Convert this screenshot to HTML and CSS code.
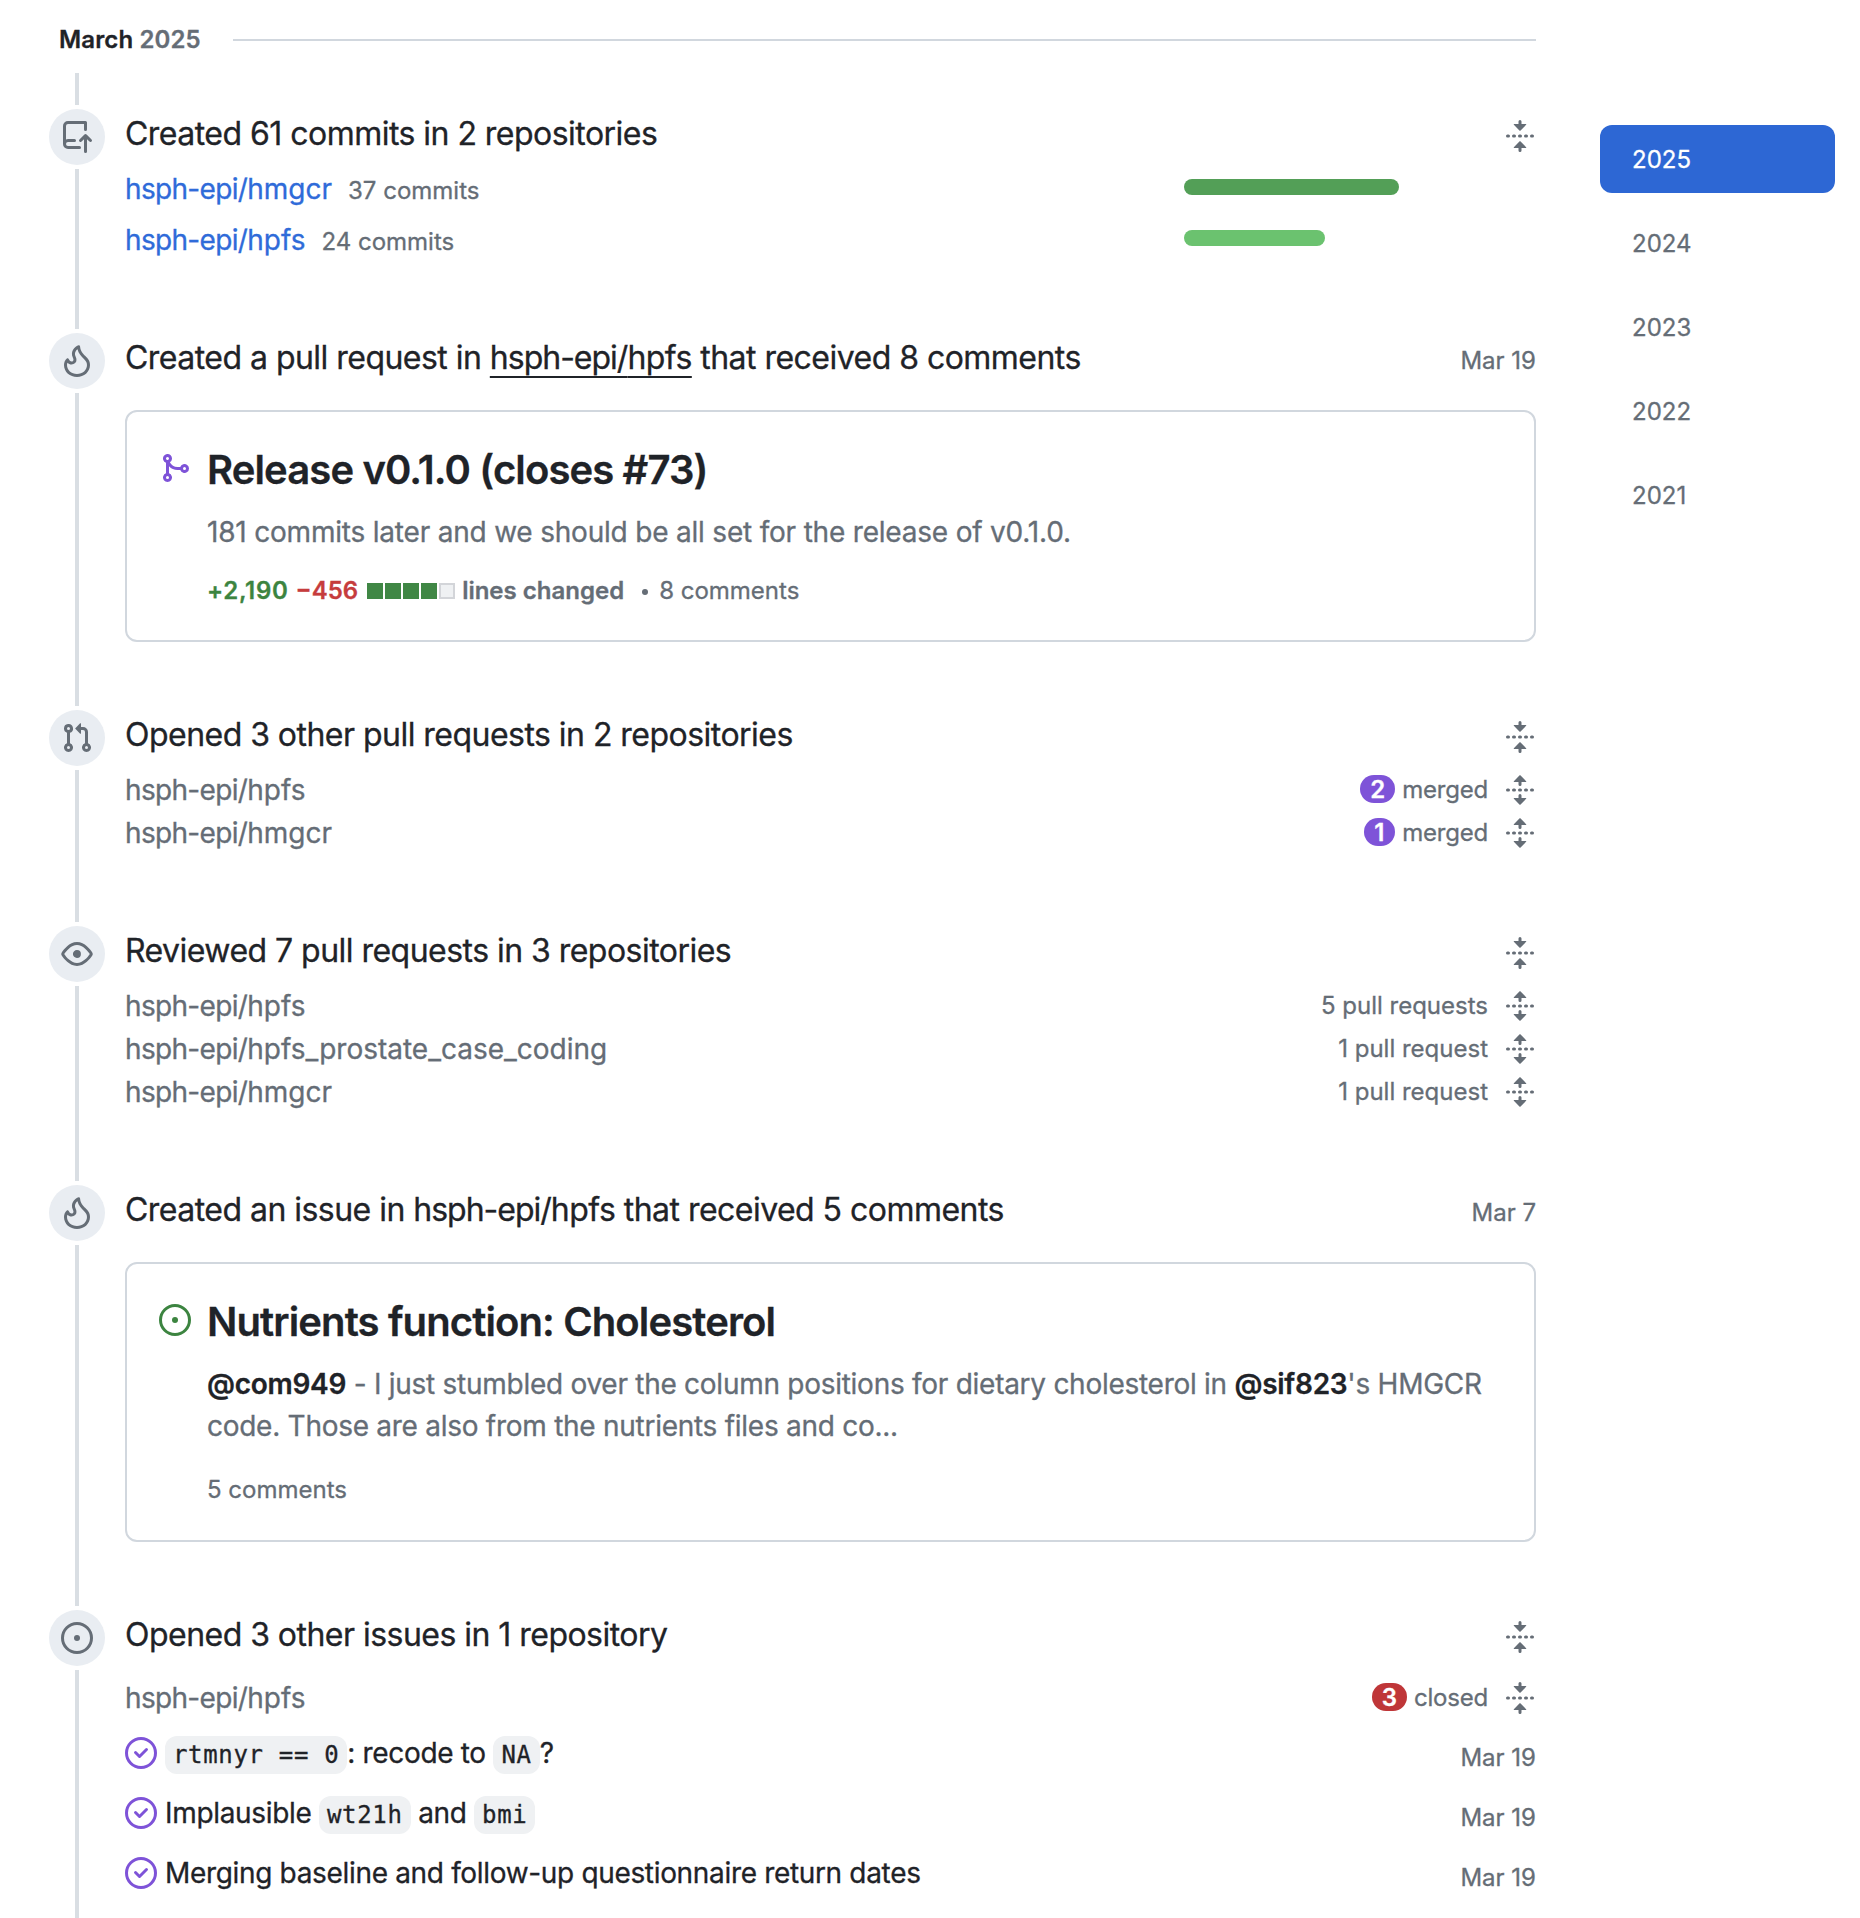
FILE: index.html
```html
<!DOCTYPE html>
<html lang="en">
<head>
<meta charset="utf-8">
<title>Contribution activity</title>
<link rel="stylesheet" href="styles.css">
</head>
<body>
<svg class="sprite" aria-hidden="true">
  <symbol id="fold" viewBox="0 0 16 16"><path d="M10.896 2H8.75V.75a.75.75 0 0 0-1.5 0V2H5.104a.25.25 0 0 0-.177.427l2.896 2.896a.25.25 0 0 0 .354 0l2.896-2.896A.25.25 0 0 0 10.896 2ZM8.75 15.25a.75.75 0 0 1-1.5 0V14H5.104a.25.25 0 0 1-.177-.427l2.896-2.896a.25.25 0 0 1 .354 0l2.896 2.896a.25.25 0 0 1-.177.427H8.75v1.25Zm-6.5-6.5a.75.75 0 0 0 0-1.5h-.5a.75.75 0 0 0 0 1.5h.5ZM6 8a.75.75 0 0 1-.75.75h-.5a.75.75 0 0 1 0-1.5h.5A.75.75 0 0 1 6 8Zm2.25.75a.75.75 0 0 0 0-1.5h-.5a.75.75 0 0 0 0 1.5h.5ZM12 8a.75.75 0 0 1-.75.75h-.5a.75.75 0 0 1 0-1.5h.5A.75.75 0 0 1 12 8Zm2.25.75a.75.75 0 0 0 0-1.5h-.5a.75.75 0 0 0 0 1.5h.5Z"/></symbol>
  <symbol id="unfold" viewBox="0 0 16 16"><path d="m8.177.677 2.896 2.896a.25.25 0 0 1-.177.427H8.75v1.25a.75.75 0 0 1-1.5 0V4H5.104a.25.25 0 0 1-.177-.427L7.823.677a.25.25 0 0 1 .354 0ZM7.25 10.75a.75.75 0 0 1 1.5 0V12h2.146a.25.25 0 0 1 .177.427l-2.896 2.896a.25.25 0 0 1-.354 0l-2.896-2.896A.25.25 0 0 1 5.104 12H7.25v-1.25Zm-5-2a.75.75 0 0 0 0-1.5h-.5a.75.75 0 0 0 0 1.5h.5ZM6 8a.75.75 0 0 1-.75.75h-.5a.75.75 0 0 1 0-1.5h.5A.75.75 0 0 1 6 8Zm2.25.75a.75.75 0 0 0 0-1.5h-.5a.75.75 0 0 0 0 1.5h.5ZM12 8a.75.75 0 0 1-.75.75h-.5a.75.75 0 0 1 0-1.5h.5A.75.75 0 0 1 12 8Zm2.25.75a.75.75 0 0 0 0-1.5h-.5a.75.75 0 0 0 0 1.5h.5Z"/></symbol>
  <symbol id="push" viewBox="0 0 16 16"><path d="M1 2.5A2.5 2.5 0 0 1 3.5 0h8.75a.75.75 0 0 1 .75.75v3.5a.75.75 0 0 1-1.5 0V1.5h-8a1 1 0 0 0-1 1v6.708A2.493 2.493 0 0 1 3.5 9h3.25a.75.75 0 0 1 0 1.5H3.5a1 1 0 0 0 0 2h5.75a.75.75 0 0 1 0 1.5H3.5A2.5 2.5 0 0 1 1 11.5Zm13.23 7.79h-.001l-1.224-1.224v6.184a.75.75 0 0 1-1.5 0V9.066L10.28 10.29a.75.75 0 0 1-1.06-1.061l2.505-2.504a.75.75 0 0 1 1.06 0L15.29 9.23a.751.751 0 0 1-.018 1.042.751.751 0 0 1-1.042.018Z"/></symbol>
  <symbol id="flame" viewBox="0 0 16 16"><path d="M9.533.753V.752c.217 2.385 1.463 3.626 2.653 4.81C13.37 6.74 14.498 7.863 14.498 10c0 3.5-3 6-6.5 6S1.5 13.512 1.5 10c0-1.298.536-2.56 1.425-3.286.376-.308.862 0 1.035.454C4.46 8.487 5.581 8.419 6 8c.282-.282.341-.811-.003-1.5C4.34 3.187 7.035.75 8.77.146c.39-.137.726.194.763.607ZM7.998 14.5c2.832 0 5-1.98 5-4.5 0-1.463-.68-2.19-1.879-3.383l-.036-.037c-1.013-1.008-2.3-2.29-2.834-4.434-.322.256-.63.579-.864.953-.432.696-.621 1.58-.046 2.73.473.947.67 2.284-.278 3.232-.61.61-1.545.84-2.403.633a2.79 2.79 0 0 1-1.436-.874A3.198 3.198 0 0 0 3 10c0 2.53 2.164 4.5 4.998 4.5Z"/></symbol>
  <symbol id="pull" viewBox="0 0 16 16"><path d="M1.5 3.25a2.25 2.25 0 1 1 3 2.122v5.256a2.251 2.251 0 1 1-1.5 0V5.372A2.25 2.25 0 0 1 1.5 3.25Zm5.677-.177L9.573.677A.25.25 0 0 1 10 .854V2.5h1A2.5 2.5 0 0 1 13.5 5v5.628a2.251 2.251 0 1 1-1.5 0V5a1 1 0 0 0-1-1h-1v1.646a.25.25 0 0 1-.427.177L7.177 3.427a.25.25 0 0 1 0-.354ZM3.75 2.5a.75.75 0 1 0 0 1.5.75.75 0 0 0 0-1.5Zm0 9.5a.75.75 0 1 0 0 1.5.75.75 0 0 0 0-1.5Zm8.25.75a.75.75 0 1 0 1.5 0 .75.75 0 0 0-1.5 0Z"/></symbol>
  <symbol id="merge" viewBox="0 0 16 16"><path d="M5.45 5.154A4.25 4.25 0 0 0 9.25 7.5h1.378a2.251 2.251 0 1 1 0 1.5H9.25A5.734 5.734 0 0 1 5 7.123v3.505a2.25 2.25 0 1 1-1.5 0V5.372a2.25 2.25 0 1 1 1.95-.218ZM4.25 13.5a.75.75 0 1 0 0-1.5.75.75 0 0 0 0 1.5Zm8.5-4.5a.75.75 0 1 0 0-1.5.75.75 0 0 0 0 1.5ZM5 3.25a.75.75 0 1 0 0 .005V3.25Z"/></symbol>
  <symbol id="eye" viewBox="0 0 16 16"><path d="M8 2c1.981 0 3.671.992 4.933 2.078 1.27 1.091 2.187 2.345 2.637 3.023a1.62 1.62 0 0 1 0 1.798c-.45.678-1.367 1.932-2.637 3.023C11.67 13.008 9.981 14 8 14c-1.981 0-3.671-.992-4.933-2.078C1.797 10.83.88 9.576.43 8.898a1.62 1.62 0 0 1 0-1.798c.45-.677 1.367-1.931 2.637-3.022C4.33 2.992 6.019 2 8 2ZM1.679 7.932a.12.12 0 0 0 0 .136c.411.622 1.241 1.75 2.366 2.717C5.176 11.758 6.527 12.5 8 12.5c1.473 0 2.825-.742 3.955-1.715 1.124-.967 1.954-2.096 2.366-2.717a.12.12 0 0 0 0-.136c-.412-.621-1.242-1.75-2.366-2.717C10.824 4.242 9.473 3.5 8 3.5c-1.473 0-2.825.742-3.955 1.715-1.124.967-1.954 2.096-2.366 2.717ZM8 10a2 2 0 1 1-.001-3.999A2 2 0 0 1 8 10Z"/></symbol>
  <symbol id="issue" viewBox="0 0 16 16"><path d="M8 9.5a1.5 1.5 0 1 0 0-3 1.5 1.5 0 0 0 0 3Z"/><path d="M8 0a8 8 0 1 1 0 16A8 8 0 0 1 8 0ZM1.5 8a6.5 6.5 0 1 0 13 0 6.5 6.5 0 0 0-13 0Z"/></symbol>
  <symbol id="closed" viewBox="0 0 16 16"><path d="M11.28 6.78a.75.75 0 0 0-1.06-1.06L7.25 8.69 5.78 7.22a.75.75 0 0 0-1.06 1.06l2 2a.75.75 0 0 0 1.06 0l3.5-3.5Z"/><path d="M16 8A8 8 0 1 1 0 8a8 8 0 0 1 16 0Zm-1.5 0a6.5 6.5 0 1 0-13 0 6.5 6.5 0 0 0 13 0Z"/></symbol>
</svg>
<div class="page">
  <main class="activity">
    <h3 class="month"><span class="month-label">March <span class="muted">2025</span></span></h3>

    <section class="item">
      <div class="rail"><span class="badge"><svg class="icon"><use href="#push"/></svg></span></div>
      <div class="body">
        <header class="head"><h4 class="heading">Created 61 commits in 2 repositories</h4><svg class="icon toggle"><use href="#fold"/></svg></header>
        <ul class="commits">
          <li class="commit-row"><a class="repo link" href="#"><span class="owner">hsph-epi/</span>hmgcr</a><a class="small" href="#">37 commits</a><span class="track"><span class="bar dark" style="width:61%"></span></span></li>
          <li class="commit-row"><a class="repo link" href="#"><span class="owner">hsph-epi/</span>hpfs</a><a class="small" href="#">24 commits</a><span class="track"><span class="bar" style="width:40%"></span></span></li>
        </ul>
      </div>
    </section>

    <section class="item">
      <div class="rail"><span class="badge"><svg class="icon"><use href="#flame"/></svg></span></div>
      <div class="body">
        <header class="head"><h4 class="heading">Created a pull request in <a class="hovered" href="#"><span class="owner">hsph-epi/</span>hpfs</a> that received 8 comments</h4><time class="small">Mar 19</time></header>
        <article class="card">
          <svg class="icon purple"><use href="#merge"/></svg>
          <div class="card-body">
            <h3 class="title">Release v0.1.0 (closes #73)</h3>
            <p class="desc short">181 commits later and we should be all set for the release of v0.1.0.</p>
            <p class="meta">
              <span class="diff"><span class="add">+2,190</span><span class="del">−456</span><span class="blocks"><i></i><i></i><i></i><i></i><i class="neutral"></i></span><span class="lines">lines changed</span></span>
              <span class="dot"></span><span class="small">8 comments</span>
            </p>
          </div>
        </article>
      </div>
    </section>

    <section class="item">
      <div class="rail"><span class="badge"><svg class="icon"><use href="#pull"/></svg></span></div>
      <div class="body">
        <header class="head"><h4 class="heading">Opened 3 other pull requests in 2 repositories</h4><svg class="icon toggle"><use href="#fold"/></svg></header>
        <ul class="rows">
          <li class="row"><span class="repo"><span class="owner">hsph-epi/</span>hpfs</span><span class="status tally small"><b class="count">2</b>merged</span><svg class="icon"><use href="#unfold"/></svg></li>
          <li class="row"><span class="repo"><span class="owner">hsph-epi/</span>hmgcr</span><span class="status tally small"><b class="count">1</b>merged</span><svg class="icon"><use href="#unfold"/></svg></li>
        </ul>
      </div>
    </section>

    <section class="item">
      <div class="rail"><span class="badge"><svg class="icon"><use href="#eye"/></svg></span></div>
      <div class="body">
        <header class="head"><h4 class="heading">Reviewed 7 pull requests in 3 repositories</h4><svg class="icon toggle"><use href="#fold"/></svg></header>
        <ul class="rows">
          <li class="row"><span class="repo"><span class="owner">hsph-epi/</span>hpfs</span><span class="status small">5 pull requests</span><svg class="icon"><use href="#unfold"/></svg></li>
          <li class="row"><span class="repo"><span class="owner">hsph-epi/</span>hpfs_prostate_case_coding</span><span class="status small">1 pull request</span><svg class="icon"><use href="#unfold"/></svg></li>
          <li class="row"><span class="repo"><span class="owner">hsph-epi/</span>hmgcr</span><span class="status small">1 pull request</span><svg class="icon"><use href="#unfold"/></svg></li>
        </ul>
      </div>
    </section>

    <section class="item">
      <div class="rail"><span class="badge"><svg class="icon"><use href="#flame"/></svg></span></div>
      <div class="body">
        <header class="head"><h4 class="heading">Created an issue in <span class="owner">hsph-epi/</span>hpfs that received 5 comments</h4><time class="small">Mar 7</time></header>
        <article class="card">
          <svg class="icon green"><use href="#issue"/></svg>
          <div class="card-body">
            <h3 class="title">Nutrients function: Cholesterol</h3>
            <p class="desc"><b>@com949</b> - I just stumbled over the column positions for dietary cholesterol in <b>@sif823</b>'s HMGCR<br>code. Those are also from the nutrients files and co...</p>
            <p class="meta spaced"><span class="small">5 comments</span></p>
          </div>
        </article>
      </div>
    </section>

    <section class="item last">
      <div class="rail"><span class="badge"><svg class="icon"><use href="#issue"/></svg></span></div>
      <div class="body">
        <header class="head"><h4 class="heading">Opened 3 other issues in 1 repository</h4><svg class="icon toggle"><use href="#fold"/></svg></header>
        <ul class="rows open">
          <li class="row"><span class="repo"><span class="owner">hsph-epi/</span>hpfs</span><span class="status tally small"><b class="count red">3</b>closed</span><svg class="icon"><use href="#fold"/></svg></li>
        </ul>
        <ul class="issues">
          <li class="issue"><svg class="icon purple"><use href="#closed"/></svg><a class="issue-title" href="#"><code>rtmnyr == 0</code>: recode to <code>NA</code>?</a><time class="small">Mar 19</time></li>
          <li class="issue"><svg class="icon purple"><use href="#closed"/></svg><a class="issue-title" href="#">Implausible <code>wt21h</code> and <code>bmi</code></a><time class="small">Mar 19</time></li>
          <li class="issue"><svg class="icon purple"><use href="#closed"/></svg><a class="issue-title" href="#">Merging baseline and follow-up questionnaire return dates</a><time class="small">Mar 19</time></li>
        </ul>
      </div>
    </section>
  </main>

  <nav class="years">
    <a class="year selected" href="#">2025</a>
    <a class="year" href="#">2024</a>
    <a class="year" href="#">2023</a>
    <a class="year" href="#">2022</a>
    <a class="year" href="#">2021</a>
  </nav>
</div>
</body>
</html>
```
FILE: styles.css
```css
* { box-sizing: border-box; }

body {
  margin: 0;
  background: #fff;
  color: #1f2328;
  font-family: Inter, "Liberation Sans", sans-serif;
  font-size: 28px;
  line-height: 42px;
  white-space: nowrap;
  -webkit-text-stroke: .3px currentColor;
}

h3, h4, p, ul { margin: 0; padding: 0; font: inherit; }
ul { list-style: none; }
a { color: inherit; text-decoration: none; }
b { font-weight: 600; }

.sprite { display: none; }
.icon { display: block; flex: none; width: 32px; height: 32px; fill: currentColor; stroke: none; }
.muted { color: #656d76; }
.purple { color: #7e53d8; }
.green { color: #3c8440; }
.small { color: #656d76; font-size: 24px; line-height: 36px; letter-spacing: 0; }

.page {
  display: flex;
  gap: 64px;
  width: 1860px;
  height: 1918px;
  padding-left: 49px;
  overflow: hidden;
}

.activity { display: flex; flex-direction: column; width: 1487px; }

/* Month divider */
.month {
  display: flex;
  align-items: flex-start;
  gap: 32px;
  height: 73px;
  padding: 6px 0 0 10px;
  font-size: 24px;
  line-height: 67px;
  font-weight: 600;
  letter-spacing: .13px;
}
.month::after { content: ""; flex: 1; height: 2px; margin-top: 33px; background: #d1d7de; }

/* Timeline */
.item { display: flex; gap: 20px; }
.item.last { flex: 1; }
.rail { display: flex; flex-direction: column; align-items: center; gap: 4px; width: 56px; }
.rail::before, .rail::after { content: ""; width: 4px; background: #d9dee3; }
.rail::before { height: 32px; }
.rail::after { flex: 1; }
.badge {
  display: grid;
  place-items: center;
  width: 56px;
  height: 56px;
  border-radius: 50%;
  background: #e9edf2;
  color: #656d76;
}
.body { flex: 1; min-width: 0; padding: 36px 0 32px; }
.head { display: flex; justify-content: space-between; align-items: baseline; height: 48px; }
.heading { font-size: 32px; line-height: 50px; letter-spacing: -.53px; }
.heading .owner { letter-spacing: -1px; }
.toggle { align-self: flex-start; margin-top: 11px; color: #656d76; }
.hovered { text-decoration: underline; text-decoration-thickness: 2px; text-underline-offset: 7px; text-decoration-skip-ink: none; }

.repo { color: #656d76; }
.repo .owner { letter-spacing: -.67px; }
.link { color: #2f6bd9; }

.commits { padding-top: 7px; margin-bottom: -1px; }
.commit-row { display: flex; align-items: baseline; gap: 16px; height: 51px; line-height: 51px; }
.track { align-self: flex-start; width: 352px; margin: 15px 0 0 auto; }
.bar { display: block; height: 16px; border-radius: 8px; background: #6bc26f; }
.bar.dark { background: #539f57; }

.rows { padding: 10px 0 4px; }
.rows.open { padding-top: 18px; }
.row { display: flex; align-items: center; height: 43px; color: #656d76; }
.status { display: flex; align-items: center; gap: 7px; margin: 0 16px 0 auto; }
.tally { letter-spacing: -.2px; }
.count {
  min-width: 31px;
  height: 28px;
  margin-bottom: 2px;
  padding: 0 10px;
  border-radius: 14px;
  background: #7e53d8;
  color: #fff;
  line-height: 30px;
  letter-spacing: 0;
}
.count.red { background: #bf3638; }

/* Cards */
.card {
  display: flex;
  gap: 16px;
  margin-top: 29px;
  padding: 32px;
  border: 2px solid #d1d7de;
  border-radius: 12px;
}
.card > .icon { margin-top: 8px; }
.title { font-size: 40px; line-height: 52px; font-weight: 600; letter-spacing: -.88px; }
.desc { margin-top: 15px; color: #656d76; letter-spacing: -.27px; }
.desc.short { letter-spacing: -.2px; }
.desc b { color: #1f2328; }
.meta { display: flex; align-items: center; height: 36px; margin-top: 19px; font-size: 24px; line-height: 36px; }
.meta > .diff, .meta > .small { padding-top: 2px; }
.meta.spaced { margin-top: 25px; }
.meta.spaced > .small { padding-top: 0; }
.diff { display: flex; align-items: center; font-weight: 600; }
.add { color: #3c8440; letter-spacing: .7px; }
.del { margin-left: 7px; color: #c63c3d; }
.blocks { display: flex; gap: 2px; margin: 0 7px 0 9px; }
.blocks i { width: 16px; height: 16px; background: #408745; }
.blocks .neutral { border: 2px solid #d3d5d9; background: #eff1f3; }
.lines { color: #656d76; }
.dot { width: 6px; height: 6px; margin: 4px 11px 0 18px; border-radius: 50%; background: #656d76; }

/* Issue list */
.issue { display: flex; align-items: center; gap: 8px; height: 60px; }
.issue .small { margin: 9px 0 0 auto; }
.issue-title { white-space: pre; letter-spacing: -.33px; }
code {
  display: inline-block;
  height: 38px;
  padding: 0 8px;
  border-radius: 12px;
  background: #eff1f3;
  font: 24px/38px "DejaVu Sans Mono", "Liberation Mono", monospace;
  letter-spacing: .67px;
}

/* Year navigation */
.years { display: flex; flex-direction: column; gap: 16px; width: 235px; padding-top: 125px; }
.year { flex: none; height: 68px; padding-left: 32px; border-radius: 12px; color: #656d76; font-size: 24px; line-height: 70px; }
.selected { background: #2d67d4; color: #fff; }
```
